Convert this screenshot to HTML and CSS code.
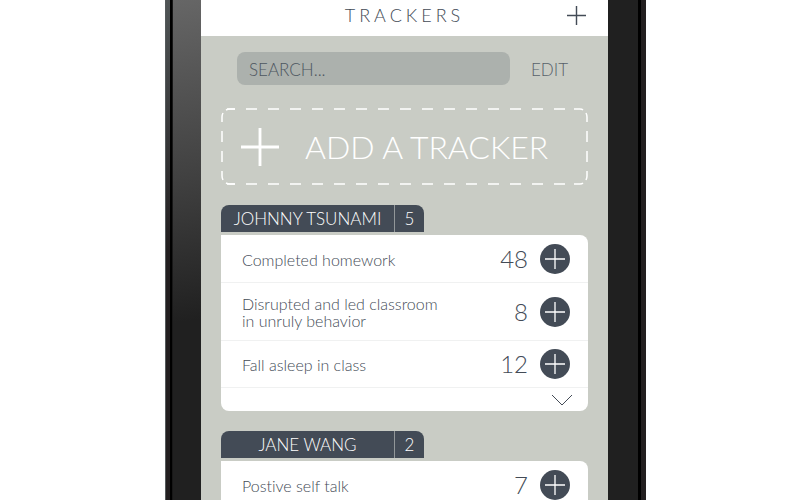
FILE: index.html
```html
<!DOCTYPE html>
<html lang="en">
<head>
<meta charset="utf-8">
<title>Trackers</title>
<meta name="viewport" content="width=device-width, initial-scale=1">
<link rel="stylesheet" href="styles.css">
</head>
<body>
<svg class="defs" aria-hidden="true">
  <symbol id="plus" viewBox="0 0 20 20"><path d="M10 0v20M0 10h20"/></symbol>
</svg>
<div class="phone">
  <div class="edge edge-left"></div>
  <div class="bezel bezel-left"></div>
  <div class="screen">
    <header class="topbar">
      <h1 class="title">TRACKERS</h1>
      <button class="icon-button" type="button" aria-label="New tracker"><svg class="top-plus"><use href="#plus"/></svg></button>
    </header>
    <main class="content">
      <form class="search-row">
        <input class="search" type="text" placeholder="SEARCH..." aria-label="Search">
        <button class="edit" type="button">EDIT</button>
      </form>
      <button class="add" type="button">
        <svg class="dashes" viewBox="0 0 367 77" preserveAspectRatio="none" aria-hidden="true">
          <path stroke-dasharray="11 11" stroke-dashoffset="-19" d="M6 1H354"/>
          <path stroke-dasharray="11 11" stroke-dashoffset="-19" d="M6 76H354"/>
          <path d="M5 2Q7 1 9 1H14M353 1H359Q361 1 362 2M5 75Q7 76 9 76H14M353 76H359Q361 76 362 75"/>
          <path d="M1 14V9Q1 7 2 5M1 23V34M1 43V54M1 63V68Q1 70 2 72M366 14V9Q366 7 365 5M366 23V34M366 43V54M366 63V68Q366 70 365 72"/>
        </svg>
        <svg class="add-plus"><use href="#plus"/></svg>
        <span>ADD A TRACKER</span>
      </button>
      <section class="group">
        <div class="tab"><h2 class="name">JOHNNY TSUNAMI</h2><span class="total">5</span></div>
        <ul class="card">
          <li class="row"><span class="label">Completed homework</span><span class="count">48</span><button class="inc" type="button" aria-label="Add to Completed homework"><svg><use href="#plus"/></svg></button></li>
          <li class="row tall"><span class="label">Disrupted and led classroom<br>in unruly behavior</span><span class="count">8</span><button class="inc" type="button" aria-label="Add to Disrupted and led classroom"><svg><use href="#plus"/></svg></button></li>
          <li class="row"><span class="label">Fall asleep in class</span><span class="count">12</span><button class="inc" type="button" aria-label="Add to Fall asleep in class"><svg><use href="#plus"/></svg></button></li>
          <li class="more"><button class="icon-button" type="button" aria-label="Show more"><svg class="chevron" viewBox="0 0 20 10"><path d="M0 0L10 10L20 0"/></svg></button></li>
        </ul>
      </section>
      <section class="group">
        <div class="tab"><h2 class="name">JANE WANG</h2><span class="total">2</span></div>
        <ul class="card">
          <li class="row"><span class="label">Postive self talk</span><span class="count">7</span><button class="inc" type="button" aria-label="Add to Postive self talk"><svg><use href="#plus"/></svg></button></li>
        </ul>
      </section>
    </main>
  </div>
  <div class="bezel bezel-right"></div>
  <div class="edge edge-right"></div>
</div>
</body>
</html>
```
FILE: styles.css
```css
* { box-sizing: border-box; margin: 0; padding: 0; }

body {
  background: #fff;
  color: #434b56;
  font-family: Lato, "Open Sans", sans-serif;
  font-weight: 300;
  font-variant-ligatures: none;
  padding-left: 11px;
}

button, input { font: inherit; color: inherit; background: none; border: 0; }
button { cursor: pointer; }
svg { display: block; fill: none; stroke: currentColor; overflow: visible; }
.defs { position: absolute; width: 0; height: 0; }

.phone {
  display: flex;
  width: 100%;
  max-width: 481px;
  height: 100vh;
  margin: 0 auto;
  overflow: hidden;
}

.edge { flex: none; width: 8px; }
.edge-left { background: linear-gradient(to right, #555a5c 0 1px, transparent 1px 5px, #000 5px 7px, #181818 7px), linear-gradient(#505556, #231f20 250px); }
.edge-right { background: linear-gradient(to right, #000 0 3px, #231f20 3px); }
.bezel { flex: none; }
.bezel-left { width: 28px; background: linear-gradient(172deg, #666 0, #404040 180px, #202020 320px); }
.bezel-right { width: 30px; background: #202020; }

.screen { flex: 1; min-width: 0; background: #c9ccc5; }

.topbar {
  display: grid;
  grid-template-columns: 1fr auto 1fr;
  align-items: center;
  height: 36px;
  padding: 0 22px 6px;
  background: #fff;
}
.title { grid-column: 2; font-size: 18px; line-height: 24px; font-weight: 300; letter-spacing: 4px; }
.topbar .icon-button { justify-self: end; }
.top-plus { width: 19px; height: 19px; stroke-width: 1.5; }

.content { padding: 16px 20px 0; }

.search-row { display: flex; align-items: center; padding: 0 20px 0 16px; }
.search {
  flex: 1;
  min-width: 0;
  height: 33px;
  padding: 2px 12px 0;
  border-radius: 8px;
  background: #acb1ad;
  font-size: 17px;
}
.search::placeholder { color: #4d5660; opacity: 1; }
.edit { margin-left: 21px; padding-top: 2px; font-size: 17px; line-height: 20px; color: #58616a; }

.add {
  position: relative;
  display: flex;
  align-items: center;
  gap: 26px;
  width: 100%;
  height: 77px;
  margin-top: 23px;
  padding: 0 20px;
  color: #fff;
  font-size: 32px;
  line-height: 40px;
}
.dashes { position: absolute; inset: 0; width: 100%; height: 100%; stroke-width: 1.5; }
.add-plus { width: 38px; height: 38px; stroke-width: 1.5; }

.group { margin-top: 20px; }
.tab {
  display: flex;
  width: 203px;
  height: 27px;
  margin-bottom: 3px;
  border-radius: 8px 8px 0 0;
  background: #434b56;
  color: #fff;
  font-size: 17px;
  line-height: 27px;
  text-align: center;
  overflow: hidden;
}
.name { flex: 1; font: inherit; }
.total { width: 30px; border-left: 1px solid #929799; }

.card { list-style: none; padding-top: 1px; background: #fff; border-radius: 0 8px 8px 8px; }
.row {
  display: flex;
  align-items: center;
  height: 47px;
  padding: 0 18px 0 21px;
  border-bottom: 1px solid #f0f1f1;
}
.row.tall { height: 58px; }
.label { flex: 1; font-size: 16px; line-height: 17px; }
.count { margin-right: 12px; font-size: 24px; line-height: 28px; }
.inc {
  display: grid;
  place-items: center;
  width: 30px;
  height: 30px;
  border-radius: 50%;
  background: #434b56;
  color: #fff;
}
.inc svg { width: 20px; height: 20px; stroke-width: 1.3; }
.more { display: flex; justify-content: flex-end; align-items: center; height: 23px; padding-right: 16px; }
.chevron { width: 20px; height: 10px; stroke-width: 1; }
```
